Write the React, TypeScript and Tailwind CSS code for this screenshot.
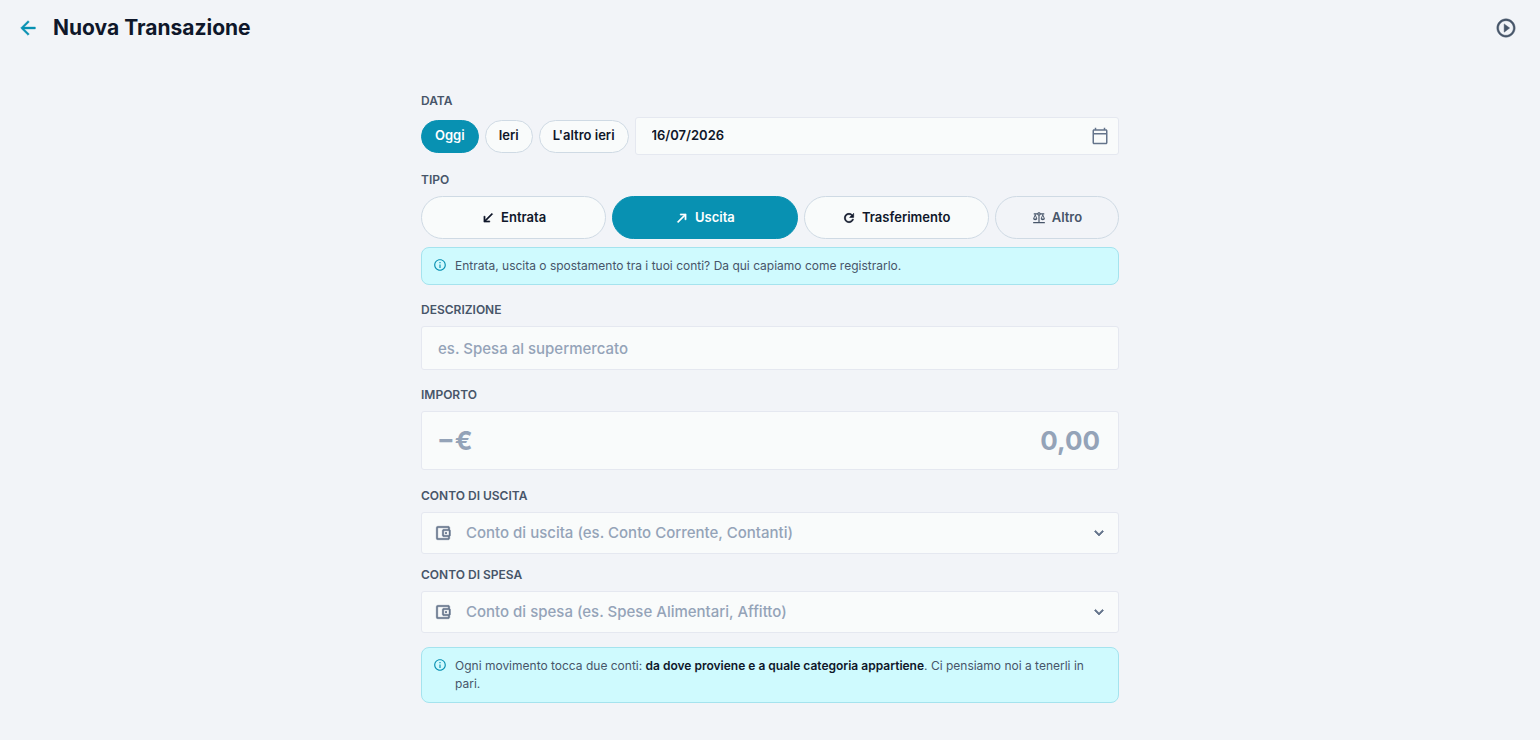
import { useState } from "react";
import type { ReactNode } from "react";
import clsx from "clsx";
import type { IconType } from "react-icons";
import {
  MdArrowBack,
  MdCallMade,
  MdCallReceived,
  MdInfoOutline,
  MdKeyboardArrowDown,
  MdOutlineAccountBalanceWallet,
  MdOutlineBalance,
  MdOutlineCalendarToday,
  MdPlayCircleOutline,
  MdRefresh,
} from "react-icons/md";

const GIORNI = [
  { label: "Oggi", data: "16/07/2026" },
  { label: "Ieri", data: "15/07/2026" },
  { label: "L'altro ieri", data: "14/07/2026" },
];

const TIPI: { label: string; icon: IconType; secondario?: boolean }[] = [
  { label: "Entrata", icon: MdCallReceived },
  { label: "Uscita", icon: MdCallMade },
  { label: "Trasferimento", icon: MdRefresh },
  { label: "Altro", icon: MdOutlineBalance, secondario: true },
];

const CAMPO = "rounded-[3px] border border-[#e5e8f0] bg-[#f9fbfb]";
const ETICHETTA = "block text-[12px] leading-4 font-semibold text-[#475569] uppercase";

//le icone Md hanno un path vuoto (fill none) che non va contornato
const TRATTO = "[&_path:not([fill=none])]:stroke-1";

function Nota({ children }: { children: ReactNode }) {
  return (
    <div className="flex items-start gap-2 rounded-lg border border-[#a5e3ee] bg-[#cffafe] px-[11px] py-[9px]">
      <MdInfoOutline className="mt-px size-[14px] shrink-0 text-[#0891b2]" />
      <p className="text-[12px] leading-[18px] text-[#475569]">{children}</p>
    </div>
  );
}

type ContoProps = {
  id: string;
  label: string;
  placeholder: string;
  opzioni: string[];
};

function SelectConto({ id, label, placeholder, opzioni }: ContoProps) {
  const [conto, setConto] = useState("");

  return (
    <div>
      <label htmlFor={id} className={ETICHETTA}>
        {label}
      </label>
      <div className={clsx(CAMPO, "mt-2 grid h-[42px] items-center")}>
        <MdOutlineAccountBalanceWallet className="pointer-events-none col-start-1 row-start-1 ml-3 size-[18px] text-[#64748b] [&_path:not([fill=none])]:stroke-[0.5]" />
        <select
          id={id}
          value={conto}
          onChange={(e) => setConto(e.target.value)}
          className={clsx(
            "col-start-1 row-start-1 h-full w-full appearance-none bg-transparent pr-10 pl-11 text-[15px] font-medium outline-none",
            conto ? "text-[#0f172a]" : "text-[#94a3b8]",
          )}
        >
          <option value="">{placeholder}</option>
          {opzioni.map((opzione) => (
            <option key={opzione}>{opzione}</option>
          ))}
        </select>
        <MdKeyboardArrowDown
          className={clsx(
            TRATTO,
            "pointer-events-none col-start-1 row-start-1 mr-2.5 size-[18px] justify-self-end text-[#64748b]",
          )}
        />
      </div>
    </div>
  );
}

function App() {
  const [data, setData] = useState("16/07/2026");
  const [tipo, setTipo] = useState("Uscita");

  return (
    <div className="min-h-screen bg-[#f2f4f8] font-['Inter',sans-serif] text-[#0f172a]">
      {/* HEADER */}
      <header className="flex h-14 items-center px-[17px]">
        <button type="button" aria-label="Indietro" className="text-[#0891b2]">
          <MdArrowBack className="size-[22px] [&_path:not([fill=none])]:stroke-[0.5]" />
        </button>
        <h1 className="ml-[14px] text-[21px] leading-7 font-bold">Nuova Transazione</h1>
        <button type="button" aria-label="Guida" className="mr-1.5 ml-auto text-[#475569]">
          <MdPlayCircleOutline className="size-[22px] [&_path:not([fill=none])]:stroke-[0.5]" />
        </button>
      </header>

      <main className="mx-auto max-w-[698px] pt-[37px] pb-9">
        {/* DATA */}
        <label htmlFor="data" className={ETICHETTA}>
          Data
        </label>
        <div className="mt-2 flex items-center gap-1.5">
          {GIORNI.map((giorno) => (
            <button
              key={giorno.label}
              type="button"
              onClick={() => setData(giorno.data)}
              className={clsx(
                "h-[33px] shrink-0 rounded-full border px-[13px] text-[13px] font-semibold",
                data === giorno.data
                  ? "border-[#0891b2] bg-[#0891b2] text-white"
                  : "border-[#cfdae4] bg-[#f9fbfb]",
              )}
            >
              {giorno.label}
            </button>
          ))}
          <div className={clsx(CAMPO, "flex h-[38px] flex-1 items-center pr-[9px] pl-4")}>
            <input
              id="data"
              type="text"
              value={data}
              onChange={(e) => setData(e.target.value)}
              className="min-w-0 flex-1 bg-transparent text-[13px] font-semibold outline-none"
            />
            <button type="button" aria-label="Apri calendario" className="text-[#64748b]">
              <MdOutlineCalendarToday className="size-[18px]" />
            </button>
          </div>
        </div>

        {/* TIPO */}
        <h2 className={clsx(ETICHETTA, "mt-[17px]")}>Tipo</h2>
        <div className="mt-2 mb-2 flex gap-1.5">
          {TIPI.map(({ label, icon: Icon, secondario }) => (
            <button
              key={label}
              type="button"
              onClick={() => setTipo(label)}
              className={clsx(
                "flex h-[43px] basis-0 items-center justify-center gap-1.5 rounded-full border text-[13px] font-semibold",
                secondario ? "grow-2" : "grow-3",
                tipo === label
                  ? "border-[#0891b2] bg-[#0891b2] text-white"
                  : secondario
                    ? "border-[#cfdae4] text-[#475569]"
                    : "border-[#cfdae4] bg-[#f9fbfb]",
              )}
            >
              <Icon className={clsx("size-[14px]", !secondario && TRATTO)} />
              {label}
            </button>
          ))}
        </div>
        <Nota>Entrata, uscita o spostamento tra i tuoi conti? Da qui capiamo come registrarlo.</Nota>

        {/* DESCRIZIONE */}
        <label htmlFor="descrizione" className={clsx(ETICHETTA, "mt-[17px]")}>
          Descrizione
        </label>
        <input
          id="descrizione"
          type="text"
          placeholder="es. Spesa al supermercato"
          className={clsx(
            CAMPO,
            "mt-2 h-[44px] w-full px-4 text-[15px] font-medium outline-none placeholder:text-[#94a3b8]",
          )}
        />

        {/* IMPORTO */}
        <label htmlFor="importo" className={clsx(ETICHETTA, "mt-[17px]")}>
          Importo
        </label>
        <div className={clsx(CAMPO, "mt-2 flex h-[59px] items-center pr-[18px] pl-[15px] text-[26px] font-bold")}>
          <span className="text-[#94a3b8]">−€</span>
          <input
            id="importo"
            type="text"
            inputMode="decimal"
            placeholder="0,00"
            className="min-w-0 flex-1 bg-transparent text-right outline-none placeholder:text-[#94a3b8]"
          />
        </div>

        {/* CONTI */}
        <div className="mt-[18px] mb-[14px] grid gap-[13px]">
          <SelectConto
            id="conto-uscita"
            label="Conto di uscita"
            placeholder="Conto di uscita (es. Conto Corrente, Contanti)"
            opzioni={["Conto Corrente", "Contanti"]}
          />
          <SelectConto
            id="conto-spesa"
            label="Conto di spesa"
            placeholder="Conto di spesa (es. Spese Alimentari, Affitto)"
            opzioni={["Spese Alimentari", "Affitto"]}
          />
        </div>
        <Nota>
          Ogni movimento tocca due conti:{" "}
          <strong className="font-semibold text-[#0f172a]">
            da dove proviene e a quale categoria appartiene
          </strong>
          . Ci pensiamo noi a tenerli in pari.
        </Nota>
      </main>
    </div>
  );
}

export default App;
